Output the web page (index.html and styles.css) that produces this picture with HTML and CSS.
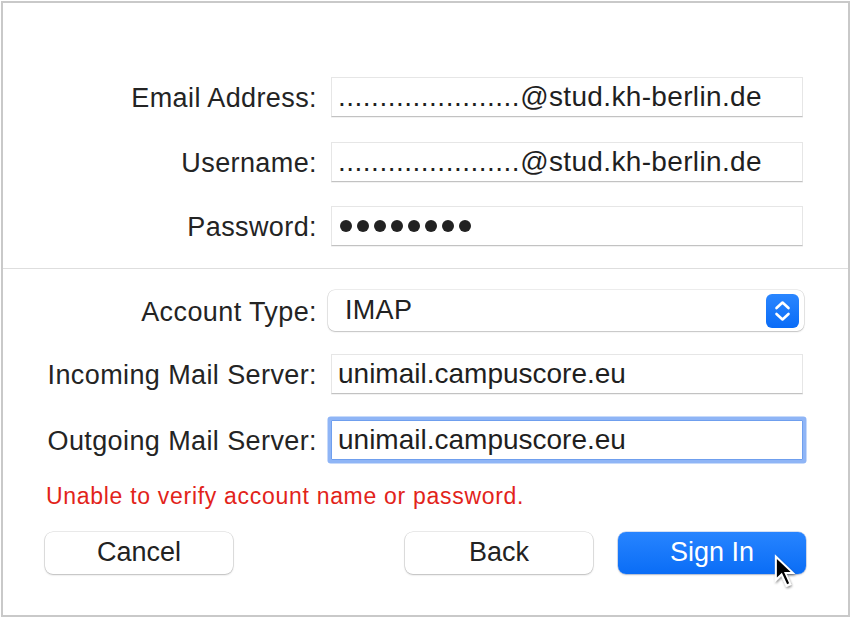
FILE: index.html
```html
<!DOCTYPE html>
<html lang="en">
<head>
<meta charset="utf-8">
<title>Mail Account</title>
<link rel="stylesheet" href="styles.css">
</head>
<body>
<div class="window">
  <div class="group group-top">
    <div class="row">
      <label class="label">Email Address:</label>
      <div class="field field-email"><span class="dots">......................</span>@stud.kh-berlin.de</div>
    </div>
    <div class="row">
      <label class="label">Username:</label>
      <div class="field field-email"><span class="dots">......................</span>@stud.kh-berlin.de</div>
    </div>
    <div class="row">
      <label class="label">Password:</label>
      <div class="field field-password">
        <span class="pw"></span><span class="pw"></span><span class="pw"></span><span class="pw"></span><span class="pw"></span><span class="pw"></span><span class="pw"></span><span class="pw"></span>
      </div>
    </div>
  </div>

  <div class="divider"></div>

  <div class="group group-bottom">
    <div class="row row-popup">
      <label class="label">Account Type:</label>
      <div class="popup">
        <span class="popup-value">IMAP</span>
        <span class="stepper">
          <svg width="33" height="34" viewBox="0 0 33 34" aria-hidden="true">
            <path d="M10.5 14 L16.5 8.5 L22.5 14" fill="none" stroke="#fff" stroke-width="2.6" stroke-linecap="round" stroke-linejoin="round"/>
            <path d="M10.5 20 L16.5 25.5 L22.5 20" fill="none" stroke="#fff" stroke-width="2.6" stroke-linecap="round" stroke-linejoin="round"/>
          </svg>
        </span>
      </div>
    </div>
    <div class="row">
      <label class="label">Incoming Mail Server:</label>
      <div class="field">unimail.campuscore.eu</div>
    </div>
    <div class="row row-focus">
      <label class="label">Outgoing Mail Server:</label>
      <div class="field field-focus">unimail.campuscore.eu</div>
    </div>
  </div>

  <p class="error">Unable to verify account name or password.</p>

  <div class="actions">
    <button class="btn">Cancel</button>
    <div class="spacer"></div>
    <button class="btn">Back</button>
    <button class="btn btn-primary">Sign In</button>
  </div>

  <svg class="cursor" width="25" height="38" viewBox="-1.5 -1.5 20 30" aria-hidden="true">
    <defs>
      <filter id="sh" x="-50%" y="-50%" width="200%" height="200%">
        <feDropShadow dx="0.6" dy="1.2" stdDeviation="0.9" flood-color="#000" flood-opacity="0.45"/>
      </filter>
    </defs>
    <path filter="url(#sh)" d="M0 0 L0 22.5 L5.2 17.4 L9 26.3 L13.2 24.5 L9.4 15.8 L16.4 15.8 Z" fill="#fff"/>
    <path d="M1.6 3.8 L1.6 18.6 L5.6 14.8 L9.8 24 L11.4 23.3 L7.3 14.2 L12.6 14.2 Z" fill="#000"/>
  </svg>
</div>
</body>
</html>
```

FILE: styles.css
```css
* { box-sizing: border-box; }

html, body {
  margin: 0;
  padding: 0;
  background: #ffffff;
}

body {
  font-family: "Liberation Sans", Arial, sans-serif;
  color: #262626;
}

.window {
  position: relative;
  width: 849px;
  height: 616px;
  margin: 1px 0 0 1px;
  border: 2px solid #c9c9c9;
  background: #ffffff;
  display: flex;
  flex-direction: column;
}

.group {
  display: flex;
  flex-direction: column;
}

.group-top {
  padding-top: 74px;
  gap: 24.5px;
}

.group-bottom {
  margin-top: 21px;
  gap: 23px;
}

.row {
  display: grid;
  grid-template-columns: 314px 472px;
  column-gap: 14px;
  align-items: center;
}

.row-focus {
  margin-top: 3px;
}

.label {
  text-align: right;
  font-size: 27px;
  letter-spacing: 0.4px;
  padding-top: 3px;
  color: #242424;
  white-space: nowrap;
}

.field {
  height: 40px;
  display: flex;
  align-items: center;
  padding-left: 6px;
  font-size: 28px;
  color: #1f1f1f;
  background: #ffffff;
  border: 1px solid #e6e6e6;
  border-bottom-color: #c2c2c2;
  box-shadow: 0 1px 0 rgba(0, 0, 0, 0.05);
  white-space: nowrap;
  overflow: hidden;
}

.field-email {
  letter-spacing: 0.35px;
}

.dots {
  letter-spacing: 0.5px;
}

.field-password {
  gap: 5px;
  padding-left: 8px;
}

.pw {
  width: 12px;
  height: 12px;
  border-radius: 50%;
  background: #222222;
}

.field-focus {
  border: 1px solid #6f9fee;
  border-radius: 1px;
  box-shadow: 0 0 0 3.5px #8fb5f6;
}

.popup {
  margin-left: -3px;
  width: 476px;
  height: 41px;
  display: flex;
  align-items: center;
  justify-content: space-between;
  padding-left: 17px;
  padding-right: 5px;
  background: #ffffff;
  border-radius: 7px;
  box-shadow: 0 0 0 0.6px rgba(0, 0, 0, 0.14), 0 1px 1.5px rgba(0, 0, 0, 0.18);
  font-size: 27px;
  color: #222222;
}

.popup-value {
  letter-spacing: 0.3px;
}

.stepper {
  display: block;
  width: 33px;
  height: 34px;
  border-radius: 6px;
  background: linear-gradient(#2a86ff, #0a6cf7);
}

.stepper svg {
  display: block;
}

.divider {
  margin-top: 22px;
  height: 1px;
  background: #dedede;
}

.error {
  margin: 22px 0 0 0;
  padding-left: 43px;
  font-size: 23px;
  line-height: 28px;
  letter-spacing: 0.7px;
  color: #e2231a;
}

.actions {
  margin-top: 21.5px;
  display: flex;
  padding: 0 42px;
  gap: 25px;
}

.spacer {
  flex: 1;
}

.btn {
  width: 188px;
  height: 42px;
  border: none;
  border-radius: 8px;
  background: #ffffff;
  box-shadow: 0 0 0 0.6px rgba(0, 0, 0, 0.16), 0 1px 2px rgba(0, 0, 0, 0.2);
  font-family: "Liberation Sans", Arial, sans-serif;
  font-size: 27px;
  color: #222222;
  padding: 0;
}

.btn-primary {
  background: linear-gradient(#2784ff, #0a6df6);
  color: #ffffff;
  box-shadow: 0 0 0 0.5px rgba(0, 60, 180, 0.3), 0 1px 2px rgba(0, 0, 0, 0.2);
}

.cursor {
  position: absolute;
  left: 770px;
  top: 549px;
}
```
